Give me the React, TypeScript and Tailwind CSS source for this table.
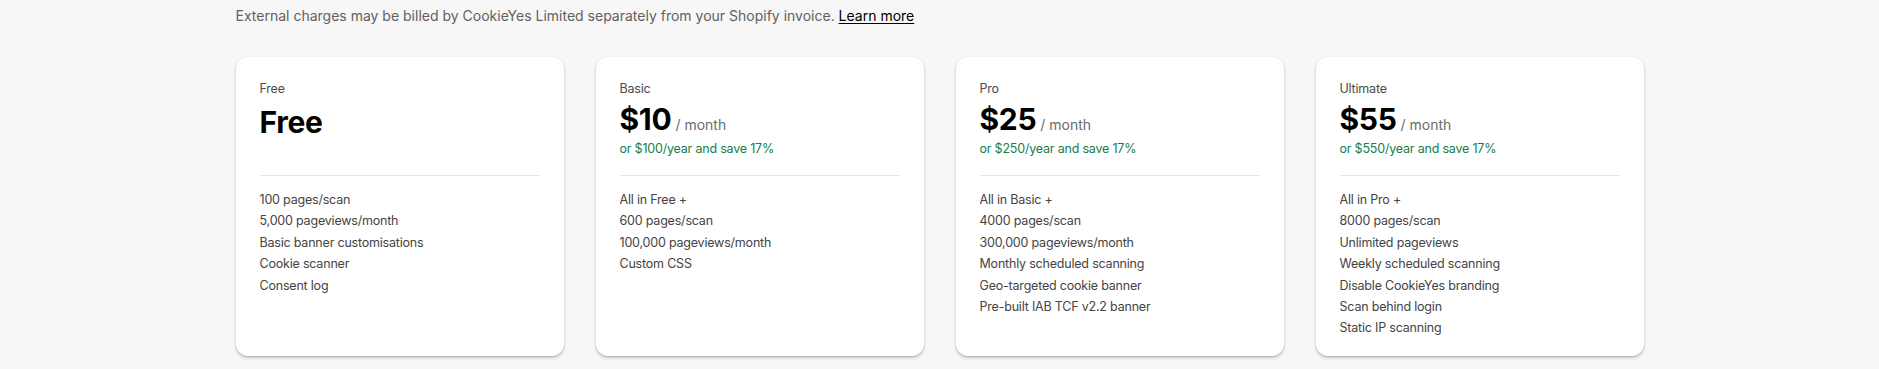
const plans = [
  {
    name: "Free",
    price: "Free",
    yearly: null,
    features: ["100 pages/scan", "5,000 pageviews/month", "Basic banner customisations", "Cookie scanner", "Consent log"],
  },
  {
    name: "Basic",
    price: "$10",
    yearly: "or $100/year and save 17%",
    features: ["All in Free +", "600 pages/scan", "100,000 pageviews/month", "Custom CSS"],
  },
  {
    name: "Pro",
    price: "$25",
    yearly: "or $250/year and save 17%",
    features: [
      "All in Basic +",
      "4000 pages/scan",
      "300,000 pageviews/month",
      "Monthly scheduled scanning",
      "Geo-targeted cookie banner",
      "Pre-built IAB TCF v2.2 banner",
    ],
  },
  {
    name: "Ultimate",
    price: "$55",
    yearly: "or $550/year and save 17%",
    features: [
      "All in Pro +",
      "8000 pages/scan",
      "Unlimited pageviews",
      "Weekly scheduled scanning",
      "Disable CookieYes branding",
      "Scan behind login",
      "Static IP scanning",
    ],
  },
];

function PlanCard({ plan }: { plan: (typeof plans)[number] }) {
  return (
    <div className="rounded-xl bg-white px-6 pt-[22px] pb-[17px] shadow-[0_1px_0_0_rgba(26,26,26,0.07),0_1px_3px_0_rgba(0,0,0,0.18),0_3px_4px_-1px_rgba(0,0,0,0.12)]">
      <div className="h-[80px]">
        <p className="text-[12.5px] leading-5 tracking-[-0.2px] text-[#4a4a4a]">{plan.name}</p>
        {plan.yearly ? (
          <>
            <div className="flex items-baseline gap-1">
              <span className="text-[30px] leading-10 font-bold tracking-[-0.3px] text-black">{plan.price}</span>
              <span className="text-[14px] text-[#6b6b6b]">/ month</span>
            </div>
            <p className="text-[12.5px] leading-5 tracking-[-0.2px] text-[#13804a]">{plan.yearly}</p>
          </>
        ) : (
          <p className="mt-[3px] text-[30px] leading-10 font-bold tracking-[-0.3px] text-black">{plan.price}</p>
        )}
      </div>
      <div className="mt-4 border-t border-[#e3e3e3]" />
      <ul className="mt-[13px]">
        {plan.features.map((f) => (
          <li key={f} className="text-[12.5px] leading-[21.4px] tracking-[-0.2px] text-[#444444]">
            {f}
          </li>
        ))}
      </ul>
    </div>
  );
}

export default function App() {
  return (
    <div className="min-h-[369px] bg-[#f7f7f7] font-['Inter',sans-serif]">
      <div className="mx-auto w-[1408px] pt-[6px]">
        <p className="text-[14px] leading-5 text-[#616161]">
          External charges may be billed by CookieYes Limited separately from your Shopify invoice.{" "}
          <a href="#" className="text-black underline underline-offset-2">
            Learn more
          </a>
        </p>
        <div className="mt-[31px] grid grid-cols-4 gap-8">
          {plans.map((p) => (
            <PlanCard key={p.name} plan={p} />
          ))}
        </div>
      </div>
    </div>
  );
}
